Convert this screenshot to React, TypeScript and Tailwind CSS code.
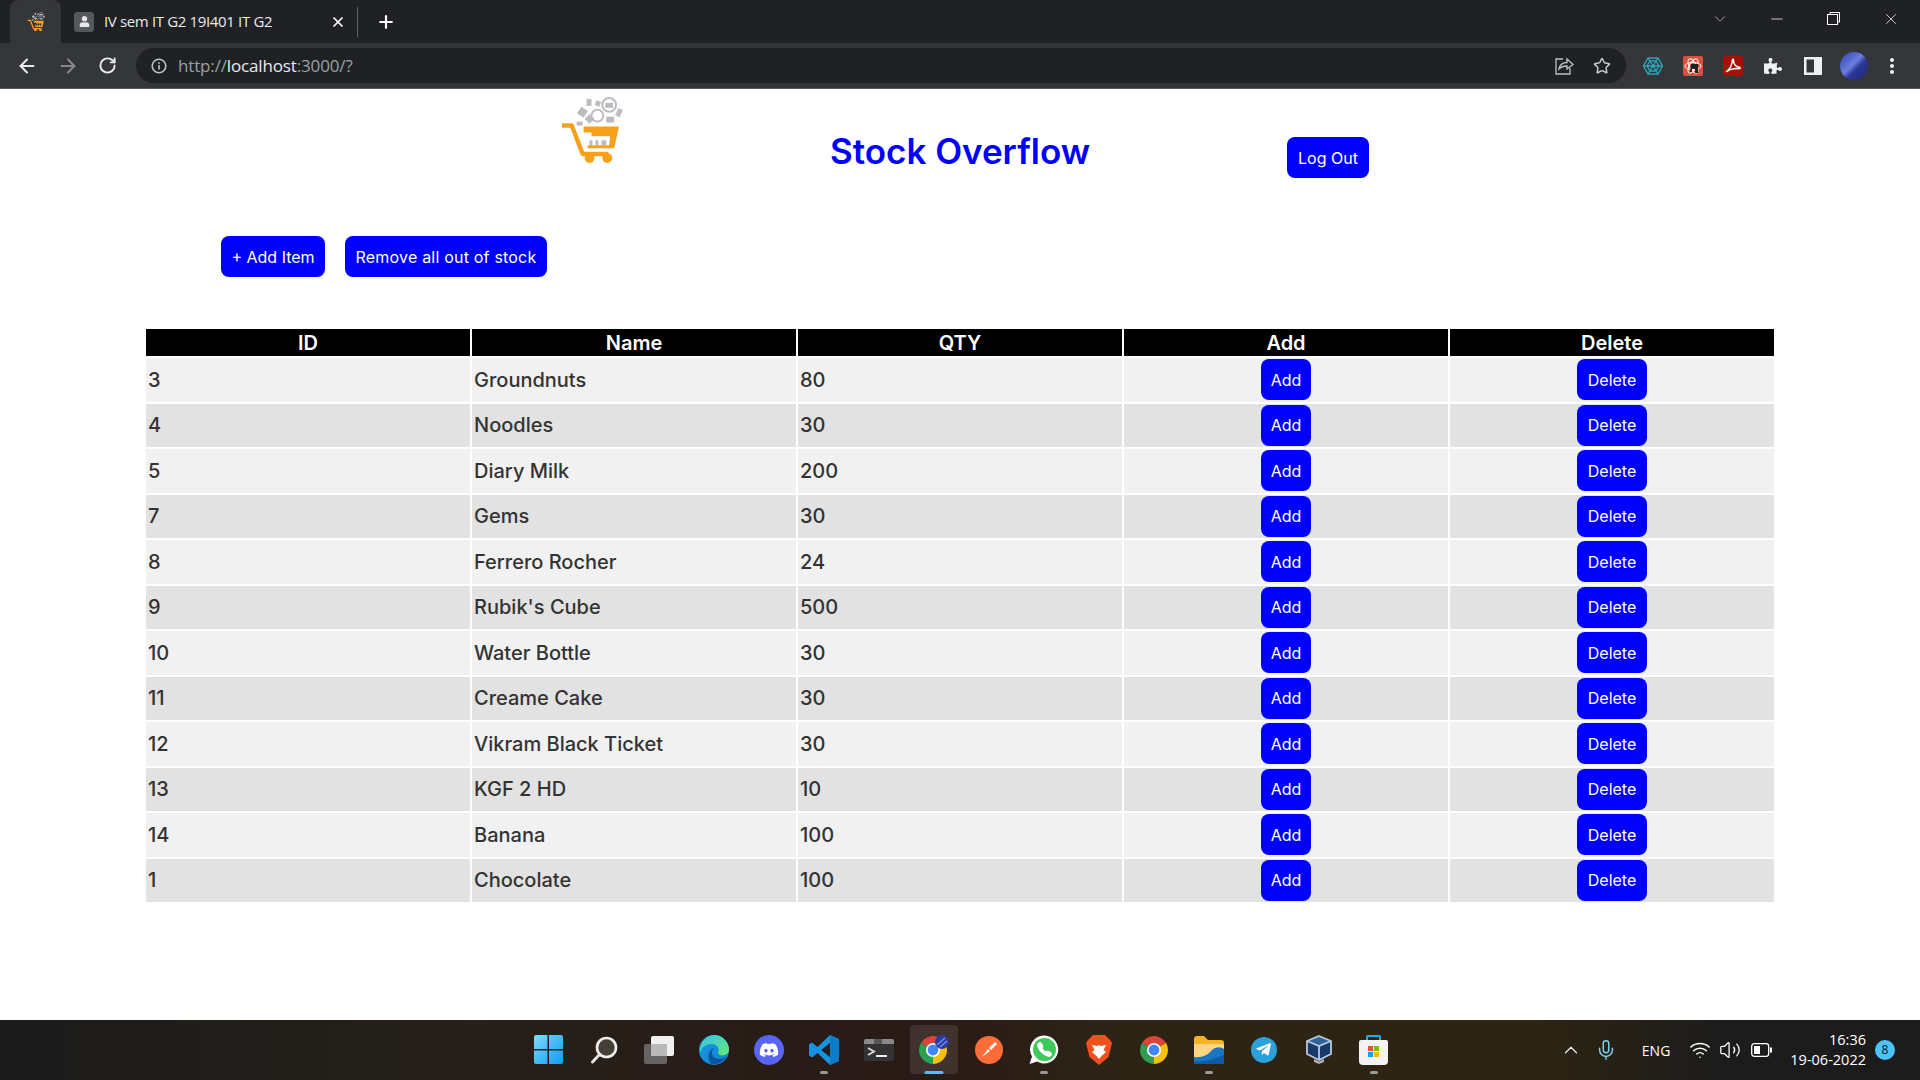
import type { ReactNode } from "react";
import { ArrowLeft, ArrowRight, RotateCw, Star, Minus, X, Plus, ChevronDown, ChevronUp, Mic, Volume2, Wifi } from "lucide-react";
import { FaPuzzlePiece, FaDiscord, FaTelegramPlane, FaUser } from "react-icons/fa";
import { BsTelephoneFill } from "react-icons/bs";

const rows: [string, string, string][] = [
  ["3", "Groundnuts", "80"],
  ["4", "Noodles", "30"],
  ["5", "Diary Milk", "200"],
  ["7", "Gems", "30"],
  ["8", "Ferrero Rocher", "24"],
  ["9", "Rubik's Cube", "500"],
  ["10", "Water Bottle", "30"],
  ["11", "Creame Cake", "30"],
  ["12", "Vikram Black Ticket", "30"],
  ["13", "KGF 2 HD", "10"],
  ["14", "Banana", "100"],
  ["1", "Chocolate", "100"],
];

function CartLogo({ size }: { size: number }) {
  const h = (size * 68) / 64;
  return (
    <svg width={size} height={h} viewBox="0 0 64 68" className="block">
      <g fill="#bcbcc0">
        <circle cx="50" cy="9" r="7" fill="none" stroke="#bcbcc0" strokeWidth="2" />
        <rect x="46" y="7" width="8" height="5" />
        <rect x="19" y="12" width="8" height="8" transform="rotate(35 22 16)" />
        <rect x="27" y="3" width="5" height="7" />
        <circle cx="38" cy="20" r="6" fill="none" stroke="#bcbcc0" strokeWidth="2" />
        <rect x="36" y="6" width="5" height="5" transform="rotate(20 41 8)" />
        <rect x="57" y="13" width="5" height="8" transform="rotate(25 60 18)" />
        <rect x="26" y="20" width="7" height="7" transform="rotate(45 30 24)" />
        <rect x="47" y="21" width="8" height="6" />
        <rect x="17" y="26" width="6" height="4" />
        <rect x="30" y="45" width="3" height="5" />
        <rect x="36" y="45" width="3" height="5" />
        <rect x="42" y="45" width="5" height="5" />
      </g>
      <path d="M2 30 H12 L23 59 H49" fill="none" stroke="#f7a11a" strokeWidth="4.500" strokeLinejoin="round" />
      <path d="M24 31 H60 L55 53 H28 V50 H50 L51 41 H32 V37 H24 Z" fill="#f7a11a" />
      <circle cx="30" cy="63" r="5" fill="#f7a11a" />
      <circle cx="48" cy="63" r="5" fill="#f7a11a" />
    </svg>
  );
}

function Chrome({ size = 28 }: { size?: number }) {
  return (
    <svg width={size} height={size} viewBox="0 0 28 28">
      <path d="M14 14 L1.88 7 A14 14 0 0 1 26.12 7 Z" fill="#db4437" />
      <path d="M14 14 L26.12 7 A14 14 0 0 1 14 28 Z" fill="#f4c20d" />
      <path d="M14 14 L14 28 A14 14 0 0 1 1.88 7 Z" fill="#2f9e4f" />
      <circle cx="14" cy="14" r="7" fill="#fff" />
      <circle cx="14" cy="14" r="5.4" fill="#4285f4" />
    </svg>
  );
}

function ChromeProfile() {
  return (
    <svg width="30" height="29" viewBox="0 0 30 29">
      <g transform="translate(0 1)">
        <path d="M14 14 L1.88 7 A14 14 0 0 1 26.12 7 Z" fill="#db4437" />
        <path d="M14 14 L26.12 7 A14 14 0 0 1 14 28 Z" fill="#f4c20d" />
        <path d="M14 14 L14 28 A14 14 0 0 1 1.88 7 Z" fill="#2f9e4f" />
        <circle cx="14" cy="14" r="7" fill="#fff" />
        <circle cx="14" cy="14" r="5.4" fill="#4285f4" />
      </g>
      <circle cx="23" cy="7" r="7" fill="#2a3a9e" />
      <path d="M18 10 L26 3 M21 12 L28 6" stroke="#7a8ce8" strokeWidth="1.500" />
    </svg>
  );
}

function Win() {
  return (
    <svg width="29" height="29" viewBox="0 0 29 29">
      <defs>
        <linearGradient id="w" x1="0" y1="0" x2="1" y2="1">
          <stop offset="0" stopColor="#7fdcff" />
          <stop offset="1" stopColor="#0a9cf5" />
        </linearGradient>
      </defs>
      <path d="M0 2a2 2 0 0 1 2-2h11.500v14H0zM15 0h12a2 2 0 0 1 2 2v12H15zM0 15.500h13.500V29H2a2 2 0 0 1-2-2zM15 15.500h14V27a2 2 0 0 1-2 2H15z" fill="url(#w)" />
    </svg>
  );
}

function Search() {
  return (
    <svg width="28" height="28" viewBox="0 0 28 28" fill="none">
      <circle cx="16.500" cy="11.500" r="9.500" fill="#453f38" stroke="#eee" strokeWidth="2.600" />
      <path d="M9.500 18.500 L2.500 26" stroke="#e6e6e6" strokeWidth="3" strokeLinecap="round" />
    </svg>
  );
}

function TaskView() {
  return (
    <svg width="30" height="28" viewBox="0 0 30 28">
      <rect x="7" y="0" width="23" height="20" rx="2" fill="#f0f0f0" />
      <rect x="0" y="8" width="23" height="20" rx="2" fill="#6b6b6b" fillOpacity="0.9" />
      <rect x="7" y="8" width="16" height="12" fill="#b9b9b9" />
    </svg>
  );
}

function Edge() {
  return (
    <svg width="30" height="30" viewBox="0 0 30 30">
      <defs>
        <linearGradient id="e1" x1="0" y1="1" x2="1" y2="0">
          <stop offset="0" stopColor="#0c59a4" />
          <stop offset="1" stopColor="#114a8b" />
        </linearGradient>
        <linearGradient id="e2" x1="0" y1="0" x2="1" y2="1">
          <stop offset="0" stopColor="#1b9de2" />
          <stop offset="1" stopColor="#0d7fd0" />
        </linearGradient>
        <linearGradient id="e3" x1="0" y1="0" x2="1" y2="1">
          <stop offset="0" stopColor="#35c1f1" />
          <stop offset="1" stopColor="#66eb6e" />
        </linearGradient>
      </defs>
      <circle cx="15" cy="15" r="15" fill="url(#e2)" />
      <path d="M15 0 A15 15 0 0 1 30 15 C30 21 20 22 19 18 C21 15 19 9 13 9 C7 9 3 12 1 17 A15 15 0 0 1 15 0Z" fill="url(#e3)" />
      <path d="M27 22 A15 15 0 0 1 12 29 C8 24 9 15 15 13 C11 17 13 24 20 24 C23 24 25 23 27 22 Z" fill="url(#e1)" />
    </svg>
  );
}

function Discord() {
  return (
    <div className="flex h-[30px] w-[30px] items-center justify-center rounded-full bg-[#5865f2]">
      <FaDiscord className="h-[20px] w-[20px] text-white" />
    </div>
  );
}

function VSCode() {
  return (
    <svg width="30" height="30" viewBox="0 0 30 30">
      <path d="M21 0 L30 4 V26 L21 30 L8.500 18 L3 22.500 L0 20.500 V9.500 L3 7.500 L8.500 12 Z M21 8 L12.500 15 L21 22 Z" fill="#1593e0" fillRule="evenodd" />
      <path d="M21 0 L30 4 V26 L21 30 Z" fill="#0b7cc9" />
      <path d="M21 8 V22 L12.500 15 Z" fill="#202020" />
    </svg>
  );
}

function Terminal() {
  return (
    <svg width="30" height="22" viewBox="0 0 30 22">
      <rect width="30" height="22" rx="2" fill="#333" />
      <path d="M0 2a2 2 0 0 1 2-2h26a2 2 0 0 1 2 2v3H0z" fill="#8a8a8a" />
      <rect x="10" y="0" width="8" height="5" fill="#555" />
      <path d="M4 9 L10 12.500 L4 16" fill="none" stroke="#d8d8d8" strokeWidth="2" />
      <rect x="12" y="16" width="11" height="2" fill="#eee" />
    </svg>
  );
}

function Postman() {
  return (
    <svg width="28" height="28" viewBox="0 0 28 28">
      <circle cx="14" cy="14" r="14" fill="#ff6c37" />
      <path d="M7 21 L13 13 L15 15 Z M14 12 L20 6 L22 8 L16 14 Z" fill="#fff" />
    </svg>
  );
}

function Whatsapp() {
  return (
    <svg width="30" height="30" viewBox="0 0 30 30">
      <path d="M15.500 0.500 A14 14 0 1 1 8 26.500 L0.500 29 L3 21.500 A14 14 0 0 1 15.500 0.500Z" fill="#fff" />
      <circle cx="15.500" cy="14.500" r="11.500" fill="#3ec95b" />
      <foreignObject x="8" y="7" width="15" height="15">
        <BsTelephoneFill className="h-[15px] w-[15px] text-white" />
      </foreignObject>
    </svg>
  );
}

function Brave() {
  return (
    <svg width="26" height="30" viewBox="0 0 26 30">
      <path d="M2 5 L7 0 H19 L24 5 L26 8 L22.500 22 L13 30 L3.500 22 L0 8 Z" fill="#f2501f" />
      <path d="M6 10 L11 11 L13 10 L15 11 L20 10 L17.500 15 L20 17 L15.500 21 H10.500 L6 17 L8.500 15 Z" fill="#fff" />
      <path d="M10.500 21 L13 19 L15.500 21 L13 24 Z" fill="#fff" />
    </svg>
  );
}

function Folder() {
  return (
    <svg width="30" height="28" viewBox="0 0 30 28">
      <path d="M0 3a3 3 0 0 1 3-3h7l4 4h13a3 3 0 0 1 3 3v4H0z" fill="#f5b324" />
      <path d="M0 8h30v17a3 3 0 0 1-3 3H3a3 3 0 0 1-3-3z" fill="#ffd583" />
      <path d="M0 21 C8 22 14 19 18 14 C22 10 27 11 30 13 V25a3 3 0 0 1-3 3H3a3 3 0 0 1-3-3z" fill="#1a76c2" />
      <path d="M0 25 C10 27 20 23 30 19 V25a3 3 0 0 1-3 3H3a3 3 0 0 1-3-3z" fill="#0d5aa6" />
    </svg>
  );
}

function Telegram() {
  return (
    <div className="flex h-[26px] w-[26px] items-center justify-center rounded-full bg-[#2aa1da]">
      <FaTelegramPlane className="h-[17px] w-[17px] text-white" />
    </div>
  );
}

function VBox() {
  return (
    <svg width="26" height="29" viewBox="0 0 26 29">
      <path d="M13 1 L25 6 V19 L13 25 L1 19 V6 Z" fill="#183a6b" />
      <path d="M13 1 L25 6 L13 11 L1 6 Z" fill="#2f6296" />
      <path d="M13 1 L25 6 V19 L13 25 L1 19 V6 Z M13 11 V25 M1 6 L13 11 L25 6" fill="none" stroke="#b9c9dc" strokeWidth="1.800" />
      <path d="M8 24 L13 26.500 L18 24 V27 L13 29 L8 27 Z" fill="#aab0b8" />
    </svg>
  );
}

function Store() {
  return (
    <svg width="29" height="30" viewBox="0 0 29 30">
      <path d="M8 6 V2 a1 1 0 0 1 1-1 h11 a1 1 0 0 1 1 1 V6" fill="none" stroke="#26a9e6" strokeWidth="2" />
      <path d="M0 7 a2 2 0 0 1 2-2 h25 a2 2 0 0 1 2 2 V26 a4 4 0 0 1-4 4 H4 a4 4 0 0 1-4-4 Z" fill="#f3f3f3" />
      <rect x="9" y="11" width="5" height="5" fill="#f25022" />
      <rect x="15" y="11" width="5" height="5" fill="#7fba00" />
      <rect x="9" y="17" width="5" height="5" fill="#00a4ef" />
      <rect x="15" y="17" width="5" height="5" fill="#ffb900" />
    </svg>
  );
}

function TaskIcon({ children, dot, active }: { children: ReactNode; dot?: boolean; active?: boolean }) {
  return (
    <div className="relative flex h-full w-[55px] items-center justify-center pb-[1px]">
      {active && <div className="absolute bottom-[6px] left-[4px] right-[3px] top-[5px] rounded bg-white/10" />}
      <div className="relative flex items-center justify-center">{children}</div>
      {dot && <div className="absolute bottom-[6px] left-1/2 h-[3px] w-[8px] -translate-x-1/2 rounded-full bg-[#9a9a9a]" />}
      {active && <div className="absolute bottom-[6px] left-1/2 h-[3px] w-[19px] -translate-x-1/2 rounded-full bg-[#4cc2ff]" />}
    </div>
  );
}

function Ext({ children }: { children: ReactNode }) {
  return <div className="flex w-[40px] items-center justify-center">{children}</div>;
}

function Btn({ children, className = "" }: { children: ReactNode; className?: string }) {
  return (
    <button className={`h-[41px] rounded-lg bg-[#0000ff] text-[16px] text-white ${className}`}>{children}</button>
  );
}

export default function App() {
  return (
    <div className="flex h-[1080px] w-[1920px] flex-col overflow-hidden bg-white font-['Inter',sans-serif]">
      {/* tab strip */}
      <div className="flex h-[43px] items-stretch bg-[#202124] font-['Open_Sans',sans-serif] text-white">
        <div className="ml-[10px] flex w-[51px] items-center justify-center rounded-t-lg bg-[#35363a]">
          <CartLogo size={18} />
        </div>
        <div className="ml-[13px] flex items-center">
          <div className="flex h-[20px] w-[20px] items-center justify-center rounded-[3px] bg-[#55585c]">
            <FaUser className="h-[11px] w-[11px] text-[#e8e8e8]" />
          </div>
          <span className="ml-[10px] w-[226px] text-[15px] tracking-[-0.35px] text-[#e8eaed]">IV sem IT G2 19I401 IT G2</span>
          <X className="h-[16px] w-[16px] text-white" strokeWidth={2.6} />
          <div className="ml-[11px] h-[30px] w-px bg-[#5f6368]" />
          <Plus className="ml-[18px] h-[20px] w-[20px] text-white" strokeWidth={2.6} />
        </div>
        <div className="ml-auto flex items-center pb-[6px]">
          <ChevronDown className="h-[18px] w-[18px] text-[#c8c8c8]" strokeWidth={1} />
          <div className="ml-[19px] flex w-[57px] justify-center">
            <Minus className="h-[18px] w-[18px] text-white" strokeWidth={1} />
          </div>
          <div className="flex w-[57px] justify-center">
            <svg width="13" height="13" viewBox="0 0 13 13" fill="none" stroke="#fff" strokeWidth="1">
              <rect x="0.500" y="2.500" width="10" height="10" />
              <path d="M3 2.500 V0.500 H12.500 V10 H10.500" />
            </svg>
          </div>
          <div className="flex w-[58px] justify-center">
            <X className="h-[18px] w-[18px] text-white" strokeWidth={1} />
          </div>
        </div>
      </div>

      {/* toolbar */}
      <div className="flex h-[46px] items-center border-b border-[#5a5b5e] bg-[#35363a] font-['Open_Sans',sans-serif]">
        <ArrowLeft className="ml-[16px] h-[22px] w-[22px] text-[#e8eaed]" strokeWidth={2.2} />
        <ArrowRight className="ml-[19px] h-[22px] w-[22px] text-[#85878a]" strokeWidth={2.2} />
        <RotateCw className="ml-[19px] h-[19px] w-[19px] text-[#e8eaed]" strokeWidth={2.4} />
        <div className="ml-[19px] flex h-[35px] w-[1490px] items-center rounded-full bg-[#202124]">
          <svg className="ml-[15px]" width="16" height="16" viewBox="0 0 16 16" fill="none">
            <circle cx="8" cy="8" r="6.800" stroke="#bdc1c6" strokeWidth="1.600" />
            <rect x="7.200" y="7" width="1.600" height="4.500" fill="#bdc1c6" />
            <rect x="7.200" y="4.300" width="1.600" height="1.600" fill="#bdc1c6" />
          </svg>
          <span className="ml-[11px] text-[17px] tracking-[-0.15px] text-[#9aa0a6]">
            http://<span className="text-[#e8eaed]">localhost</span>:3000/?
          </span>
          <svg className="ml-auto" width="20" height="20" viewBox="0 0 20 20" fill="none" stroke="#bdc1c6" strokeWidth="1.300">
            <path d="M9 3 H2 V18 H16 V12" />
            <path d="M5 13 C6 8 10 6.500 13 6.500 V3 L19 8.500 L13 13 V10 C10 10 7 11 5 13Z" />
          </svg>
          <Star className="ml-[19px] mr-[15px] h-[18px] w-[18px] text-[#c8ccd0]" strokeWidth={2} />
        </div>
        <div className="ml-[7px] flex items-center">
          <Ext>
            <svg width="20" height="18" viewBox="0 0 20 18" fill="none" stroke="#2aa7b8" strokeWidth="1.300">
              <path d="M5 1 H15 L19.500 9 L15 17 H5 L0.500 9 Z" />
              <path d="M7 4 H13 L16 9 L13 14 H7 L4 9 Z" />
              <path d="M5 1 L10 9 L15 1 M0.500 9 H19.500 M5 17 L10 9 L15 17" />
            </svg>
          </Ext>
          <Ext>
            <svg width="20" height="20" viewBox="0 0 20 20" fill="none">
              <rect width="20" height="20" rx="2" fill="#d9503f" />
              <ellipse cx="10" cy="10" rx="8" ry="3.500" stroke="#fff" strokeWidth="1" />
              <ellipse cx="10" cy="10" rx="8" ry="3.500" stroke="#fff" strokeWidth="1" transform="rotate(60 10 10)" />
              <ellipse cx="10" cy="10" rx="8" ry="3.500" stroke="#fff" strokeWidth="1" transform="rotate(120 10 10)" />
              <path d="M8 8 H15 V17 H12 V13 H9 V16 H7 Z" fill="#222" />
            </svg>
          </Ext>
          <Ext>
            <svg width="20" height="20" viewBox="0 0 20 20" fill="none">
              <rect width="20" height="20" rx="3" fill="#a90f05" />
              <path d="M3 16 C6 14 9 9 9.500 4 C9.800 3 10.500 3 10.500 4.500 C10.500 8 13 11 17 11.500 C17.500 12 16.500 13 15 12.800 C11 12 7 13 3 16Z" fill="none" stroke="#fff" strokeWidth="1.500" />
            </svg>
          </Ext>
          <Ext>
            <FaPuzzlePiece className="h-[18px] w-[18px] text-[#eef0f2]" />
          </Ext>
          <Ext>
            <svg width="18" height="18" viewBox="0 0 18 18">
              <path d="M0 0H18V18H0Z M2.500 2.500V15.500H10V2.500Z" fill="#eef0f2" fillRule="evenodd" />
            </svg>
          </Ext>
          <div className="ml-[7px] h-[28px] w-[28px] rounded-full bg-[linear-gradient(135deg,#2a3fa8,#6a7fe0_45%,#2b3696_60%,#1e2a78)]" />
          <svg className="ml-[22px]" width="4" height="16" viewBox="0 0 4 16" fill="#eef0f2">
            <circle cx="2" cy="2" r="2" />
            <circle cx="2" cy="8" r="2" />
            <circle cx="2" cy="14" r="2" />
          </svg>
        </div>
      </div>

      {/* page */}
      <main className="min-h-0 flex-1 font-['Inter',sans-serif]">
        <header className="flex h-[89px] items-start">
          <div className="ml-[560px] mt-[7px]">
            <CartLogo size={63} />
          </div>
          <h1 className="ml-[206px] mt-[40px] w-[262px] text-center text-[35px] leading-[44px] font-semibold whitespace-nowrap text-[#0000ff]">Stock Overflow</h1>
          <Btn className="ml-[196px] mt-[48px] w-[82px]">Log Out</Btn>
        </header>
        <div className="mt-[58px] flex gap-[20px] pl-[221px]">
          <Btn className="w-[104px]">+ Add Item</Btn>
          <Btn className="w-[202px] tracking-[0.2px]">Remove all out of stock</Btn>
        </div>
        <table className="mx-auto mt-[50px] w-[85%] table-fixed border-separate border-spacing-[2px] text-[20px]">
          <thead>
            <tr className="bg-black text-white">
              {["ID", "Name", "QTY", "Add", "Delete"].map((h) => (
                <th key={h} className="h-[27px] p-0 text-center text-[20px] leading-[24px] font-semibold">{h}</th>
              ))}
            </tr>
          </thead>
          <tbody>
            {rows.map((r, i) => (
              <tr key={r[0]} className={`h-[43.5px] text-[#333] ${i % 2 === 0 ? "bg-[#f1f1f1]" : "bg-[#e2e2e2]"}`}>
                <td className="p-0 pl-[2px] font-medium">{r[0]}</td>
                <td className="p-0 pl-[2px] font-medium">{r[1]}</td>
                <td className="p-0 pl-[2px] font-medium">{r[2]}</td>
                <td className="p-0 text-center align-middle">
                  <Btn className="mx-auto block w-[50px]">Add</Btn>
                </td>
                <td className="p-0 text-center align-middle">
                  <Btn className="mx-auto block w-[70px]">Delete</Btn>
                </td>
              </tr>
            ))}
          </tbody>
        </table>
      </main>

      {/* taskbar */}
      <footer className="flex h-[60px] shrink-0 items-center bg-[linear-gradient(90deg,#1b1b1b_0%,#262019_25%,#2a1a16_48%,#2d2416_58%,#2d2412_80%,#1c1c1c_90%)] pl-[521px] font-['Open_Sans',sans-serif] text-white">
        <TaskIcon><Win /></TaskIcon>
        <TaskIcon><Search /></TaskIcon>
        <TaskIcon><TaskView /></TaskIcon>
        <TaskIcon><Edge /></TaskIcon>
        <TaskIcon><Discord /></TaskIcon>
        <TaskIcon dot><VSCode /></TaskIcon>
        <TaskIcon><Terminal /></TaskIcon>
        <TaskIcon active><ChromeProfile /></TaskIcon>
        <TaskIcon><Postman /></TaskIcon>
        <TaskIcon dot><Whatsapp /></TaskIcon>
        <TaskIcon><Brave /></TaskIcon>
        <TaskIcon><Chrome /></TaskIcon>
        <TaskIcon dot><Folder /></TaskIcon>
        <TaskIcon><Telegram /></TaskIcon>
        <TaskIcon><VBox /></TaskIcon>
        <TaskIcon dot><Store /></TaskIcon>
        <div className="ml-auto flex items-center pr-[25px]">
          <ChevronUp className="h-[22px] w-[22px] text-[#eee]" strokeWidth={1.3} />
          <Mic className="ml-[13px] h-[22px] w-[22px] text-[#7fd0ea]" strokeWidth={1.6} />
          <span className="ml-[25px] text-[14px]">ENG</span>
          <Wifi className="ml-[19px] h-[22px] w-[22px] text-white" strokeWidth={1.6} />
          <Volume2 className="ml-[8px] h-[22px] w-[22px] text-white" strokeWidth={1.4} />
          <svg className="ml-[10px]" width="21" height="14" viewBox="0 0 21 14" fill="none">
            <rect x="0.700" y="0.700" width="17" height="12.600" rx="2.500" stroke="#fff" strokeWidth="1.300" />
            <rect x="3" y="3" width="6" height="8" fill="#fff" />
            <rect x="19" y="4.500" width="2" height="5" fill="#fff" />
          </svg>
          <div className="ml-[18px] flex flex-col items-end text-[14.5px] leading-[20px]">
            <span>16:36</span>
            <span>19-06-2022</span>
          </div>
          <div className="ml-[9px] flex h-[20px] w-[20px] items-center justify-center rounded-full bg-[#4cc2ff] text-[12px] text-[#111]">8</div>
        </div>
      </footer>
    </div>
  );
}
